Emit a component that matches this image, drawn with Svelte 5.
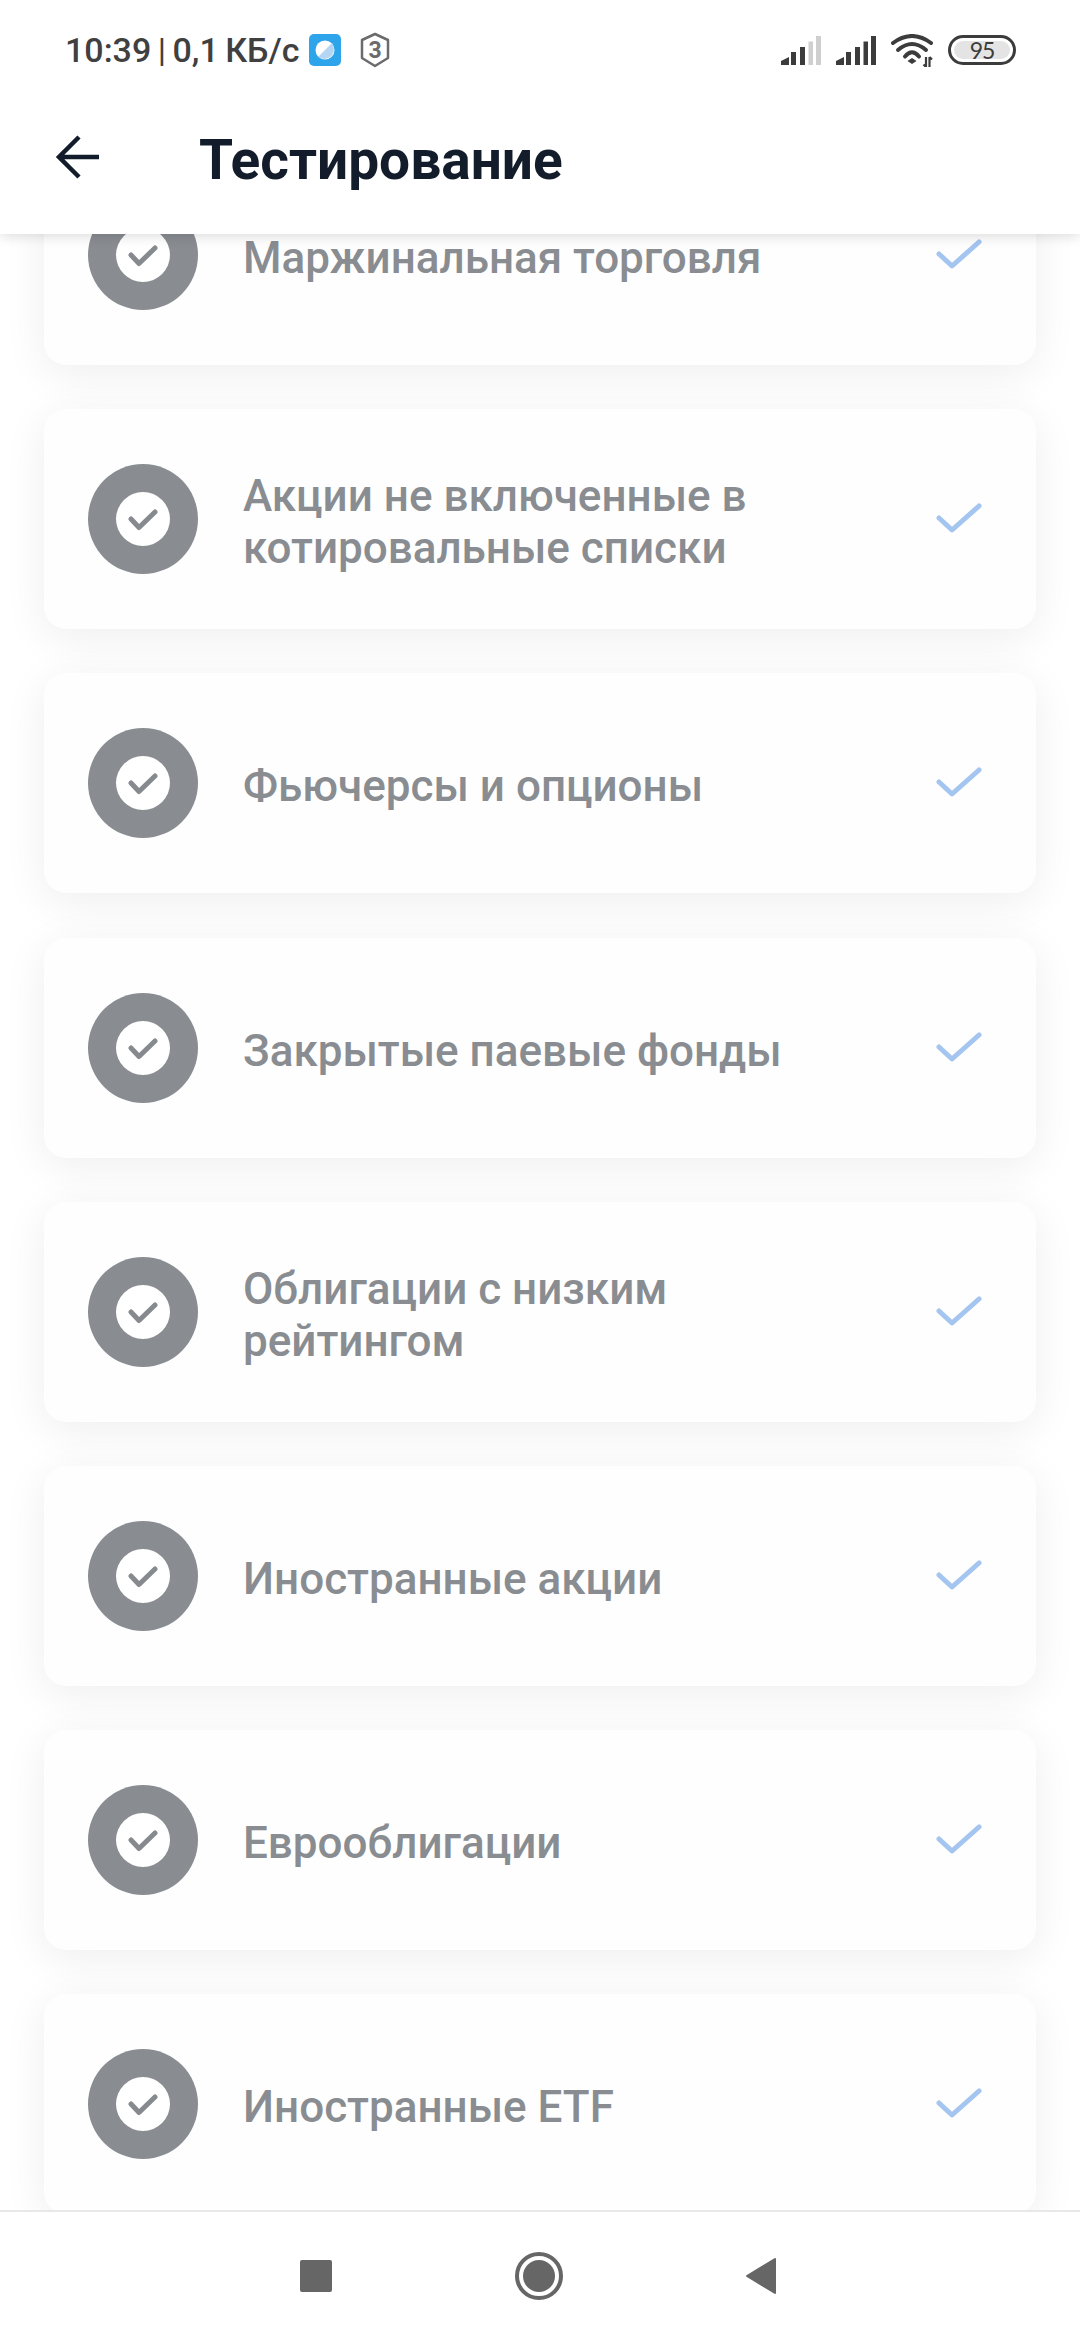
<script>
	const items = [
		'Маржинальная торговля',
		'Акции не включенные в котировальные списки',
		'Фьючерсы и опционы',
		'Закрытые паевые фонды',
		'Облигации с низким рейтингом',
		'Иностранные акции',
		'Еврооблигации',
		'Иностранные ETF'
	];
</script>

<div class="screen">
	<header class="top">
		<div class="status">
			<div class="status-left">
				<span class="status-text">10:39 <span class="sep">|</span> 0,1 КБ/с</span>
				<svg class="app-icon" width="32" height="32" viewBox="0 0 32 32">
					<rect width="32" height="32" rx="5" fill="#2ea4ea" />
					<circle cx="16" cy="16" r="9.5" fill="#fff" />
					<path d="M9.3 22.700 L22.700 9.300 A9.500 9.500 0 0 1 9.300 22.700Z" fill="#b5d6f2" />
				</svg>
				<svg class="shield" width="30" height="36" viewBox="0 0 30 36">
					<path d="M15 2 L28 8 V26 L15 34 L2 26 V8 Z" fill="none" stroke="#6b6b6b" stroke-width="2.500" stroke-linejoin="round" />
					<text x="15" y="25.500" text-anchor="middle" class="shield-num">3</text>
				</svg>
			</div>
			<div class="status-right">
				<svg width="40" height="29" viewBox="0 0 40 29">
					<path d="M0 25 L8 21 V29 H0Z M10 16 H15 V29 H10Z M19 11 H24 V29 H19Z" fill="#3c3c3c" />
					<path d="M27.500 5.500 H32 V29 H27.500Z M35 0 H40 V29 H35Z" fill="#cfcfcf" />
				</svg>
				<svg width="40" height="29" viewBox="0 0 40 29">
					<path d="M0 25 L8 21 V29 H0Z M10 16 H15 V29 H10Z M19 11 H24 V29 H19Z M27.500 5.500 H32 V29 H27.500Z M35 0 H40 V29 H35Z" fill="#3c3c3c" />
				</svg>
				<svg width="42" height="33" viewBox="0 0 42 33">
					<path d="M2 9 Q21 -5 40 9" fill="none" stroke="#3c3c3c" stroke-width="4" stroke-linecap="round" />
					<path d="M7 16 Q21 4 35 16" fill="none" stroke="#3c3c3c" stroke-width="4" stroke-linecap="round" />
					<path d="M14 22.500 Q21 14 28 22.500" fill="none" stroke="#3c3c3c" stroke-width="4" stroke-linecap="round" />
					<path d="M21 24 L25.500 27 L21 30 L16.500 27Z" fill="#3c3c3c" />
					<path d="M35 23 V33 M32.500 30.500 L35 33 M38.500 23 V33 M38.500 23 L41 25.500" fill="none" stroke="#3c3c3c" stroke-width="2.200" />
				</svg>
				<div class="battery"><span class="battery-fill">95</span></div>
			</div>
		</div>
		<div class="toolbar">
			<svg class="back" width="44" height="46" viewBox="0 0 44 46">
				<path d="M3 23 H44 M24 3 L4 23 L24 43" fill="none" stroke="#131c2b" stroke-width="4.500" />
			</svg>
			<h1>Тестирование</h1>
		</div>
	</header>

	<main class="content">
		<ul class="list">
			{#each items as item}
				<li class="card">
					<div class="badge">
						<div class="badge-inner">
							<svg width="30" height="24" viewBox="0 0 30 24">
								<path d="M3 12 L11 20.500 L27 5" fill="none" stroke="#868a8e" stroke-width="5" stroke-linecap="round" stroke-linejoin="round" />
							</svg>
						</div>
					</div>
					<span class="label">{item}</span>
					<svg class="tick" width="46" height="32" viewBox="0 0 46 32">
						<path d="M3 16 L16 28 L43 4" fill="none" stroke="#a3c5ef" stroke-width="5" stroke-linecap="round" stroke-linejoin="round" />
					</svg>
				</li>
			{/each}
		</ul>
	</main>

	<nav class="nav">
		<div class="square"></div>
		<div class="home"><div class="home-dot"></div></div>
		<svg width="30" height="36" viewBox="0 0 30 36">
			<path d="M29 1 V35 L1 18 Z" fill="#666" stroke="#666" stroke-width="2" stroke-linejoin="round" />
		</svg>
	</nav>
</div>

<style>
	:global(body) {
		margin: 0;
		background: #fff;
	}
	.screen {
		width: 1080px;
		height: 2340px;
		display: flex;
		flex-direction: column;
		overflow: hidden;
		font-family: Roboto, sans-serif;
	}
	.top {
		flex: none;
		height: 234px;
		background: #fff;
		box-shadow: 0 2px 12px rgba(0, 0, 0, 0.14);
		position: relative;
		z-index: 2;
	}
	.status {
		height: 100px;
		box-sizing: border-box;
		padding: 0 64px 0 65px;
		display: flex;
		align-items: center;
		justify-content: space-between;
	}
	.status-left {
		display: flex;
		align-items: center;
	}
	.status-text {
		font-size: 34px;
		font-weight: 500;
		word-spacing: -2px;
		color: #404040;
	}
	.sep {
		font-weight: 400;
	}
	.app-icon {
		margin-left: 10px;
	}
	.shield {
		margin-left: 19px;
	}
	.shield-num {
		font-family: Roboto, sans-serif;
		font-size: 23px;
		font-weight: 700;
		fill: #6b6b6b;
	}
	.status-right {
		display: flex;
		align-items: center;
		gap: 15px;
	}
	.battery {
		width: 68px;
		height: 30px;
		box-sizing: border-box;
		border: 3px solid #3c3c3c;
		border-radius: 15px;
		padding: 3px;
		display: flex;
	}
	.battery-fill {
		flex: 1;
		background: #e4e4e4;
		border-radius: 9px;
		display: flex;
		align-items: center;
		justify-content: center;
		font-family: Lato, sans-serif;
		font-size: 23px;
		letter-spacing: -1px;
		color: #3c3c3c;
	}
	.toolbar {
		height: 120px;
		display: flex;
		align-items: center;
		padding-left: 55px;
		box-sizing: border-box;
	}
	.back {
		flex: none;
		margin-bottom: 6px;
	}
	h1 {
		margin: 0 0 0 100px;
		font-size: 55px;
		font-weight: 700;
		color: #131c2b;
	}
	.content {
		flex: 1;
		min-height: 0;
		overflow: hidden;
	}
	.list {
		list-style: none;
		margin: -89px 44px 0;
		padding: 0;
		display: flex;
		flex-direction: column;
		gap: 44.2px;
	}
	.card {
		height: 220px;
		flex: none;
		box-sizing: border-box;
		background: #fefefe;
		border-radius: 22px;
		box-shadow: 0 8px 44px rgba(0, 0, 0, 0.07);
		padding: 0 54px 0 44px;
		display: flex;
		align-items: center;
	}
	.badge {
		flex: none;
		width: 110px;
		height: 110px;
		border-radius: 50%;
		background: #898d91;
		display: flex;
		align-items: center;
		justify-content: center;
	}
	.badge-inner {
		width: 54px;
		height: 54px;
		border-radius: 50%;
		background: #fff;
		display: flex;
		align-items: center;
		justify-content: center;
	}
	.label {
		flex: 1;
		margin: 6px 0 0 45px;
		padding-right: 150px;
		font-size: 44px;
		line-height: 52px;
		font-weight: 500;
		color: #898d91;
	}
	.tick {
		flex: none;
		margin-bottom: 2px;
	}
	.nav {
		flex: none;
		height: 130px;
		box-sizing: border-box;
		background: #fff;
		border-top: 2px solid #e8e8e8;
		display: flex;
		align-items: center;
		justify-content: space-between;
		padding: 0 304px 0 300px;
		position: relative;
		z-index: 2;
	}
	.square {
		width: 32px;
		height: 32px;
		border-radius: 2px;
		background: #666;
	}
	.home {
		width: 48px;
		height: 48px;
		box-sizing: border-box;
		border: 4px solid #666;
		border-radius: 50%;
		display: flex;
		align-items: center;
		justify-content: center;
	}
	.home-dot {
		width: 32px;
		height: 32px;
		border-radius: 50%;
		background: #666;
	}
</style>
